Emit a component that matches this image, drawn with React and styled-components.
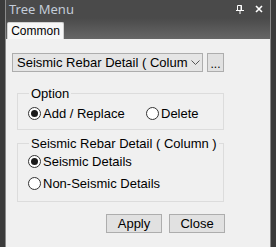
import React, { useState } from 'react';
import styled, { createGlobalStyle } from 'styled-components';

const GlobalStyle = createGlobalStyle`
  html, body {
    margin: 0;
    padding: 0;
    background: #3b3b3b;
    height: 100%;
    overflow: hidden;
  }
`;

const Frame = styled.div`
  margin-left: 5px;
  width: 264px;
  height: 247px;
  border-left: 1px solid #8a8a8a;
  border-right: 1px solid #8a8a8a;
  display: flex;
  flex-direction: column;
  font-family: "Liberation Sans", Arial, sans-serif;
`;

const TitleBar = styled.div`
  height: 18px;
  background: #4a4a4a;
  display: flex;
  align-items: center;
  padding: 0 7px 0 3px;
  color: #c3ccd8;
  font-family: "Noto Sans", "Open Sans", sans-serif;
  font-size: 13px;
`;

const Title = styled.span`
  flex: 1;
  line-height: 18px;
`;

const IconButton = styled.span`
  display: flex;
  align-items: center;
  margin-left: ${p => p.gap || 0}px;
`;

const TabStrip = styled.div`
  height: 21px;
  background: linear-gradient(#4a4a4a, #666);
  display: flex;
  align-items: flex-end;
  padding-left: 1px;
`;

const Tab = styled.div`
  height: 16px;
  width: 55px;
  background: #f7f7f7;
  border: 1px solid #d0d0d0;
  border-bottom: none;
  border-radius: 2px 2px 0 0;
  font-size: 12px;
  color: #000;
  display: flex;
  align-items: center;
  justify-content: center;
`;

const Panel = styled.div`
  flex: 1;
  background: #f0f0f0;
  padding: 14px 0 0 6px;
  font-size: 13px;
  color: #000;
`;

const ComboRow = styled.div`
  display: flex;
  gap: 4px;
  align-items: flex-start;
`;

const Combo = styled.div`
  width: 185px;
  height: 17px;
  border: 1px solid #adadad;
  background: #e5e5e5;
  display: flex;
  align-items: center;
  padding-left: 4px;
`;

const ComboText = styled.span`
  flex: 1;
  overflow: hidden;
  white-space: nowrap;
`;

const Chevron = styled.span`
  width: 14px;
  display: flex;
  justify-content: center;
`;

const DotsButton = styled.div`
  width: 15px;
  height: 17px;
  border: 1px solid #adadad;
  background: #e1e1e1;
  display: flex;
  align-items: flex-end;
  justify-content: center;
  line-height: 14px;
  font-size: 12px;
`;

const Group = styled.fieldset`
  margin: ${p => p.top}px 0 0 5px;
  width: 207px;
  min-width: 0;
  box-sizing: border-box;
  border: 1px solid #dcdcdc;
  padding: ${p => p.pad};
  display: flex;
  flex-direction: ${p => (p.row ? 'row' : 'column')};
  gap: ${p => p.gap}px;
`;

const Legend = styled.legend`
  padding: 0 2px;
  margin-left: 1px;
  line-height: 15px;
  white-space: nowrap;
`;

const RadioLabel = styled.label`
  display: flex;
  align-items: center;
  gap: 2px;
  height: 15px;
  width: ${p => (p.w ? `${p.w}px` : 'auto')};
  cursor: default;
  white-space: nowrap;
`;

const Circle = styled.span`
  width: 11px;
  height: 11px;
  border: 1px solid #333;
  border-radius: 50%;
  background: #fff;
  display: flex;
  align-items: center;
  justify-content: center;
  &::after {
    content: '';
    width: 7px;
    height: 7px;
    border-radius: 50%;
    background: ${p => (p.on ? '#1a1a1a' : 'transparent')};
  }
`;

const ButtonRow = styled.div`
  display: flex;
  gap: 7px;
  margin: 12px 0 0 94px;
`;

const Button = styled.button`
  width: 56px;
  height: 19px;
  border: 1px solid #adadad;
  background: #e1e1e1;
  font-family: "Liberation Sans", Arial, sans-serif;
  font-size: 13px;
  color: #000;
  padding: 0;
  border-radius: 0;
`;

const Radio = ({ on, onClick, children, w }) => (
  <RadioLabel w={w} onClick={onClick}>
    <Circle on={on} />
    {children}
  </RadioLabel>
);

const PinIcon = () => (
  <svg width="8" height="9" viewBox="0 0 8 9">
    <path d="M1.5 0.5h4v4.5M1.5 0.5v4.5M0 5.5h8M4 5.5v3.5" stroke="#fff" strokeWidth="1" fill="none" />
    <rect x="4.5" y="0.5" width="1.5" height="5" fill="#fff" />
  </svg>
);

const CloseIcon = () => (
  <svg width="8" height="8" viewBox="0 0 8 8">
    <path d="M1 1l6 6M7 1l-6 6" stroke="#fff" strokeWidth="1.6" />
  </svg>
);

const ChevronIcon = () => (
  <svg width="9" height="5" viewBox="0 0 9 5">
    <path d="M0.5 0.5l4 4 4-4" stroke="#555" strokeWidth="1" fill="none" />
  </svg>
);

export default function App() {
  const [mode, setMode] = useState('add');
  const [seismic, setSeismic] = useState(true);

  return (
    <>
      <GlobalStyle />
      <Frame>
        <TitleBar>
          <Title>Tree Menu</Title>
          <IconButton><PinIcon /></IconButton>
          <IconButton gap={11}><CloseIcon /></IconButton>
        </TitleBar>
        <TabStrip>
          <Tab>Common</Tab>
        </TabStrip>
        <Panel>
          <ComboRow>
            <Combo>
              <ComboText>Seismic Rebar Detail ( Column )</ComboText>
              <Chevron><ChevronIcon /></Chevron>
            </Combo>
            <DotsButton>...</DotsButton>
          </ComboRow>

          <Group top={14} row gap={0} pad="5px 8px 8px 10px">
            <Legend>Option</Legend>
            <Radio w={118} on={mode === 'add'} onClick={() => setMode('add')}>Add / Replace</Radio>
            <Radio on={mode === 'delete'} onClick={() => setMode('delete')}>Delete</Radio>
          </Group>

          <Group top={6} gap={7} pad="3px 8px 10px 10px">
            <Legend>Seismic Rebar Detail ( Column )</Legend>
            <Radio on={seismic} onClick={() => setSeismic(true)}>Seismic Details</Radio>
            <Radio on={!seismic} onClick={() => setSeismic(false)}>Non-Seismic Details</Radio>
          </Group>

          <ButtonRow>
            <Button>Apply</Button>
            <Button>Close</Button>
          </ButtonRow>
        </Panel>
      </Frame>
    </>
  );
}
